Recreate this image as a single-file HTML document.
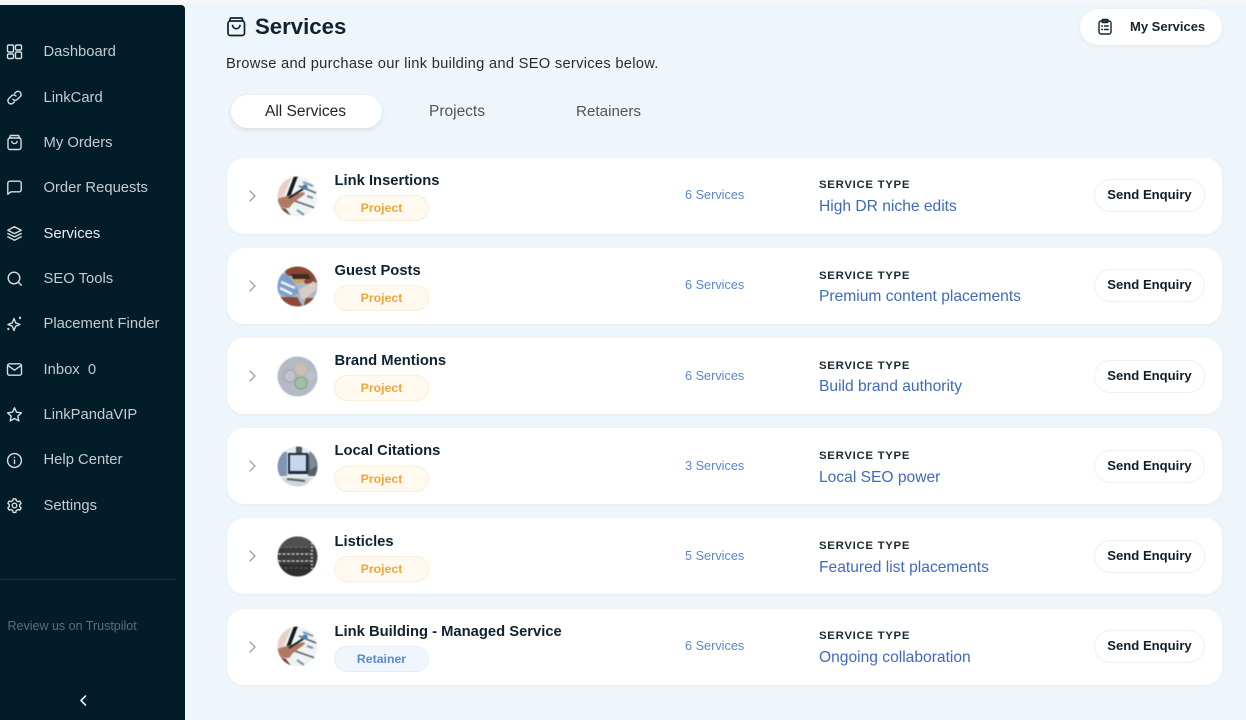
<!DOCTYPE html>
<html lang="en"><head><meta charset="utf-8"><title>Services</title>
<style>
*{box-sizing:border-box;margin:0;padding:0}
html,body{width:1246px;height:720px;overflow:hidden;background:#eef5fb;font-family:"Liberation Sans",sans-serif}
.a{position:absolute;white-space:nowrap}
#top{left:0;top:0;width:1246px;height:5px;background:#f4f6f7}
#side{left:0;top:5px;width:185px;height:715px;background:#031c29;border-top-right-radius:4px}
.n{left:43.5px;font-size:14.8px;line-height:20px;height:20px;color:#c2ccd2}
.i{left:6px;width:17px;height:17px;fill:none;stroke:#d6dee2;stroke-width:1.4;stroke-linecap:round;stroke-linejoin:round}
.card{left:227px;width:995px;background:#fff;border-radius:17px;box-shadow:0 1px 3px rgba(60,90,120,.05)}
.chev{left:247px;width:10px;height:14px;fill:none;stroke:#9aa0a4;stroke-width:1.3;stroke-linecap:round;stroke-linejoin:round}
.av{left:277px;width:41px;height:41px;filter:blur(.4px)}
.t{left:334.5px;font-size:14.77px;font-weight:700;color:#0e2230;line-height:20px;height:20px}
.b{left:334px;width:95px;height:26px;border-radius:13px;background:#fff9ef;border:1px solid #f8eeda;color:#eba73d;font-size:12.3px;font-weight:700;text-align:center;line-height:25px}
.b.r{background:#eff6fd;border-color:#e3eef9;color:#5c8ad2}
.l{line-height:24px}
.c{left:685px;font-size:12.7px;color:#5d87c8;line-height:16px;height:16px}
.s{left:819px;font-size:11.4px;font-weight:700;letter-spacing:.7px;color:#1d2a33;line-height:14px;height:14px}
.v{left:819px;font-size:15.6px;color:#3f6abc;line-height:21px;height:21px}
.e{left:1094px;width:111px;height:33px;border-radius:17px;background:#fff;border:1px solid #edf0f2;font-size:13.1px;font-weight:700;color:#111e28;text-align:center;line-height:30px}
</style></head><body>
<div class="a" id="top"></div>
<div class="a" id="side"></div>

<svg class="a i" style="top:43px" viewBox="0 0 17 17"><rect x="1.5" y="2" width="6" height="7" rx="1.3"/><rect x="9.5" y="2" width="6" height="5" rx="1.3"/><rect x="1.5" y="11" width="6" height="4.5" rx="1.3"/><rect x="9.5" y="9" width="6" height="6.5" rx="1.3"/></svg>
<div class="a n" style="top:42px">Dashboard</div>
<svg class="a i" style="top:88.5px" viewBox="0 0 17 17"><path d="M7 10.2a3 3 0 0 0 4.4.2l2.8-2.8a3.1 3.1 0 0 0-4.4-4.4L8.6 4.4"/><path d="M10 7a3 3 0 0 0-4.4-.2L2.800 9.600a3.100 3.100 0 0 0 4.400 4.400l1.200-1.200"/></svg>
<div class="a n" style="top:88px">LinkCard</div>
<svg class="a i" style="top:134px" viewBox="0 0 17 17"><rect x="2" y="4" width="13" height="11.5" rx="2"/><path d="M3.5 4l.9-2.500h8.200l.9 2.500M5.800 7.500a2.800 2.800 0 0 0 5.400 0"/></svg>
<div class="a n" style="top:133px">My Orders</div>
<svg class="a i" style="top:179px" viewBox="0 0 17 17"><path d="M1.800 4.200a2 2 0 0 1 2-2h9.400a2 2 0 0 1 2 2v6.600a2 2 0 0 1-2 2H5L1.800 15.200z"/></svg>
<div class="a n" style="top:178px">Order Requests</div>
<svg class="a i" style="top:225px" viewBox="0 0 17 17"><path d="M8.500 1.800l6.700 3.400-6.700 3.400-6.700-3.400zM1.800 8.500l6.700 3.400 6.700-3.400M1.800 11.800l6.700 3.400 6.700-3.400"/></svg>
<div class="a n" style="top:224px;color:#e9eef1">Services</div>
<svg class="a i" style="top:270px" viewBox="0 0 17 17"><circle cx="8" cy="8" r="5.800"/><path d="M12.300 12.300l3 3"/></svg>
<div class="a n" style="top:269px">SEO Tools</div>
<svg class="a i" style="top:315px" viewBox="0 0 17 17"><path d="M8 3.500l1.700 4.300 4.300 1.700-4.300 1.700L8 15.500l-1.700-4.300L2 9.500l4.300-1.700z"/><path d="M14 2.500v.8M2.300 13.800v.4" stroke-width="2"/></svg>
<div class="a n" style="top:314px">Placement Finder</div>
<svg class="a i" style="top:361px" viewBox="0 0 17 17"><rect x="1.500" y="2.800" width="14" height="11.400" rx="2"/><path d="M2 4.600l6.500 4.600 6.500-4.600"/></svg>
<div class="a n" style="top:360px">Inbox&nbsp; 0</div>
<svg class="a i" style="top:406px" viewBox="0 0 17 17"><path d="M8.500 1.800l2 4.400 4.900.6-3.600 3.300 1 4.800-4.300-2.400-4.300 2.400 1-4.800L1.600 6.800l4.900-.6z"/></svg>
<div class="a n" style="top:405px">LinkPandaVIP</div>
<svg class="a i" style="top:452px" viewBox="0 0 17 17"><circle cx="8.500" cy="8.500" r="6.900"/><path d="M8.500 8v3.600M8.500 5.200v.2"/></svg>
<div class="a n" style="top:450px">Help Center</div>
<svg class="a i" style="top:497px" viewBox="0 0 17 17"><path d="M7.200 1.800h2.600l.5 1.900 1.600.9 1.900-.5 1.300 2.200-1.400 1.400v1.800l1.400 1.400-1.300 2.200-1.900-.5-1.600.9-.5 1.900H7.200l-.5-1.900-1.600-.9-1.900.5-1.300-2.200 1.400-1.400V7.700L1.900 6.300l1.300-2.200 1.900.5 1.600-.9z"/><circle cx="8.500" cy="8.500" r="2.300"/></svg>
<div class="a n" style="top:496px">Settings</div>

<div class="a" style="left:0;top:579px;width:176px;height:1px;background:#1a323e"></div>
<div class="a" style="left:7.5px;top:618px;font-size:12.5px;line-height:16px;color:#5d6f79">Review us on Trustpilot</div>
<svg class="a" style="left:79px;top:694px;fill:none;stroke:#e8eef1;stroke-width:1.6;stroke-linecap:round;stroke-linejoin:round" width="9" height="13" viewBox="0 0 9 13"><path d="M6.500 2L2 6.500 6.500 11"/></svg>

<svg class="a" style="left:226px;top:16px;fill:none;stroke:#0e2230;stroke-width:1.7;stroke-linecap:round;stroke-linejoin:round" width="20" height="21" viewBox="0 0 20 21"><rect x="2" y="5" width="16.5" height="14.5" rx="2.5"/><path d="M3.500 5l1-3h11.500l1 3M6.500 9.500a3.800 3.800 0 0 0 7.500 0"/></svg>
<div class="a" style="left:255px;top:13px;font-size:22.2px;font-weight:700;line-height:28px;color:#0e2230">Services</div>
<div class="a" style="left:226px;top:55px;font-size:14.7px;line-height:18px;color:#1f2c35;letter-spacing:.28px">Browse and purchase our link building and SEO services below.</div>

<div class="a" style="left:1080px;top:9px;width:142px;height:36px;border-radius:18px;background:#fff;box-shadow:0 1px 4px rgba(60,90,120,.08)"></div>
<svg class="a" style="left:1097px;top:18px;fill:none;stroke:#14232e;stroke-width:1.4;stroke-linecap:round;stroke-linejoin:round" width="16" height="17" viewBox="0 0 16 17"><rect x="2" y="3" width="12" height="13" rx="2"/><rect x="5" y="1.500" width="6" height="3" rx="1"/><path d="M4.800 8h.6M7.500 8h3.700M4.800 11.500h.6M7.500 11.500h3.700"/></svg>
<div class="a" style="left:1130px;top:18px;font-size:13px;font-weight:700;line-height:17px;color:#14232e">My Services</div>

<div class="a" style="left:231px;top:95px;width:151px;height:33px;border-radius:17px;background:#fff;box-shadow:0 2px 5px rgba(60,80,100,.13)"></div>
<div class="a" style="left:265px;top:102px;font-size:15.5px;line-height:19px;color:#17242e">All Services</div>
<div class="a" style="left:429px;top:102px;font-size:15.5px;line-height:19px;color:#4c565d">Projects</div>
<div class="a" style="left:576px;top:102px;font-size:15.2px;line-height:19px;color:#4c565d">Retainers</div>

<svg width="0" height="0" style="position:absolute"><defs><clipPath id="cp"><circle cx="20.5" cy="20.5" r="20"/></clipPath></defs></svg>

<div class="a card" style="top:158px;height:76px"></div>
<svg class="a chev" style="top:189px" viewBox="0 0 10 14"><path d="M3 2l5 5-5 5"/></svg>
<svg class="a av" style="top:176px" viewBox="0 0 41 41"><g clip-path="url(#cp)"><rect width="41" height="41" fill="#eef3f5"/><path d="M0 0h15L5 24 0 24z" fill="#e9cfc8"/><path d="M17 0h4L12 24H8z" fill="#15181b"/><path d="M22 10l17 7M18 25l20 7" stroke="#58646c" stroke-width="1.5"/><path d="M26 6l10 4M30 20l6 2M20 34l7 5" stroke="#7f93a0" stroke-width="2"/><path d="M0 23l10-3 17-4 1 2-12 9-4 5H8L0 30z" fill="#b07a62"/><path d="M0 30l9 3 6 8H0z" fill="#6f4438"/><path d="M12 22l14-9" stroke="#1b2226" stroke-width="2"/><circle cx="28" cy="11" r="2.6" fill="#3e7fb5"/></g></svg>
<div class="a t" style="top:171px">Link Insertions</div>
<div class="a b" style="top:195px">Project</div>
<div class="a c" style="top:187px">6 Services</div>
<div class="a s" style="top:178px">SERVICE TYPE</div>
<div class="a v" style="top:196px">High DR niche edits</div>
<div class="a e" style="top:179px">Send Enquiry</div>

<div class="a card" style="top:248px;height:76px"></div>
<svg class="a chev" style="top:279px" viewBox="0 0 10 14"><path d="M3 2l5 5-5 5"/></svg>
<svg class="a av" style="top:266px" viewBox="0 0 41 41"><g clip-path="url(#cp)"><rect width="41" height="41" fill="#a8b9c8"/><path d="M8 0h33v16l-12 2-8-8H9z" fill="#8a4630"/><path d="M14 8h17l3 5H16z" fill="#3b2c27"/><path d="M16 13h13l-4 4H18z" fill="#d8a24b"/><path d="M0 8h10l8 10 4 9-10 5L0 26z" fill="#7c9fca"/><path d="M4 16l14 6M3 22l12 6" stroke="#eef4f8" stroke-width="2.5"/><path d="M22 24l15-9 4 7-13 11-4 0z" fill="#d8cdc4"/><path d="M0 31h20l6 10H0zM29 32h12v9H26z" fill="#8d4b36"/></g></svg>
<div class="a t" style="top:261px">Guest Posts</div>
<div class="a b" style="top:285px">Project</div>
<div class="a c" style="top:277px">6 Services</div>
<div class="a s" style="top:269px">SERVICE TYPE</div>
<div class="a v" style="top:286px">Premium content placements</div>
<div class="a e" style="top:269px">Send Enquiry</div>

<div class="a card" style="top:338px;height:76px"></div>
<svg class="a chev" style="top:369px" viewBox="0 0 10 14"><path d="M3 2l5 5-5 5"/></svg>
<svg class="a av" style="top:356px" viewBox="0 0 41 41"><g clip-path="url(#cp)"><rect width="41" height="41" fill="#b3bac4"/><circle cx="13" cy="20" r="6" fill="#c2c1cc" stroke="#a9a0ac"/><circle cx="24" cy="13" r="6" fill="#cdbfae"/><circle cx="24" cy="27" r="6" fill="#a7bda9" stroke="#7fae85" stroke-width="1.5"/><circle cx="34" cy="20" r="5" fill="#bcc0cb"/><path d="M30 0l8 10" stroke="#8ba5d0" stroke-width="2"/></g></svg>
<div class="a t" style="top:351px">Brand Mentions</div>
<div class="a b" style="top:375px">Project</div>
<div class="a c" style="top:368px">6 Services</div>
<div class="a s" style="top:359px">SERVICE TYPE</div>
<div class="a v" style="top:376px">Build brand authority</div>
<div class="a e" style="top:360px">Send Enquiry</div>

<div class="a card" style="top:428px;height:76px"></div>
<svg class="a chev" style="top:459px" viewBox="0 0 10 14"><path d="M3 2l5 5-5 5"/></svg>
<svg class="a av" style="top:446px" viewBox="0 0 41 41"><g clip-path="url(#cp)"><rect width="41" height="41" fill="#e6eaee"/><rect x="0" y="6" width="10" height="24" fill="#7d96b4"/><rect x="11" y="7" width="20" height="21" fill="#1d2c3f"/><rect x="13" y="9" width="16" height="16" fill="#c7d6ea"/><rect x="19" y="0" width="6" height="7" fill="#4e5862"/><path d="M31 8h10v22H31z" fill="#55606a"/><path d="M32 6h5l3 14-7 4z" fill="#7d8b94"/><path d="M3 32h30l-4 9H8z" fill="#cfd6dc"/><path d="M10 33l18 2" stroke="#555f68" stroke-width="2"/></g></svg>
<div class="a t" style="top:441px">Local Citations</div>
<div class="a b l" style="top:466px">Project</div>
<div class="a c" style="top:458px">3 Services</div>
<div class="a s" style="top:449px">SERVICE TYPE</div>
<div class="a v" style="top:467px">Local SEO power</div>
<div class="a e" style="top:450px">Send Enquiry</div>

<div class="a card" style="top:518px;height:76px"></div>
<svg class="a chev" style="top:549px" viewBox="0 0 10 14"><path d="M3 2l5 5-5 5"/></svg>
<svg class="a av" style="top:536px" viewBox="0 0 41 41"><g clip-path="url(#cp)"><rect width="41" height="41" fill="#3c3c3c"/><rect y="0" width="41" height="12" fill="#4f4f4f"/><rect y="28" width="41" height="13" fill="#2f2f2f"/><path d="M1 18h36M1 25h36" stroke="#d9d9d9" stroke-width="1.2" stroke-dasharray="3 1.5"/><path d="M35 7v26" stroke="#c9c9c9" stroke-width="2" stroke-dasharray="1.5 2"/><path d="M3 11h28M3 32h28" stroke="#777" stroke-width="1" stroke-dasharray="2 3"/></g></svg>
<div class="a t" style="top:532px">Listicles</div>
<div class="a b l" style="top:556px">Project</div>
<div class="a c" style="top:548px">5 Services</div>
<div class="a s" style="top:539px">SERVICE TYPE</div>
<div class="a v" style="top:557px">Featured list placements</div>
<div class="a e" style="top:540px">Send Enquiry</div>

<div class="a card" style="top:609px;height:76px"></div>
<svg class="a chev" style="top:640px" viewBox="0 0 10 14"><path d="M3 2l5 5-5 5"/></svg>
<svg class="a av" style="top:626px" viewBox="0 0 41 41"><g clip-path="url(#cp)"><rect width="41" height="41" fill="#eef3f5"/><path d="M0 0h15L5 24 0 24z" fill="#e9cfc8"/><path d="M17 0h4L12 24H8z" fill="#15181b"/><path d="M22 10l17 7M18 25l20 7" stroke="#58646c" stroke-width="1.5"/><path d="M26 6l10 4M30 20l6 2M20 34l7 5" stroke="#7f93a0" stroke-width="2"/><path d="M0 23l10-3 17-4 1 2-12 9-4 5H8L0 30z" fill="#b07a62"/><path d="M0 30l9 3 6 8H0z" fill="#6f4438"/><path d="M12 22l14-9" stroke="#1b2226" stroke-width="2"/><circle cx="28" cy="11" r="2.6" fill="#3e7fb5"/></g></svg>
<div class="a t" style="top:622px">Link Building - Managed Service</div>
<div class="a b r l" style="top:646px">Retainer</div>
<div class="a c" style="top:638px">6 Services</div>
<div class="a s" style="top:629px">SERVICE TYPE</div>
<div class="a v" style="top:647px">Ongoing collaboration</div>
<div class="a e" style="top:630px">Send Enquiry</div>
</body></html>
